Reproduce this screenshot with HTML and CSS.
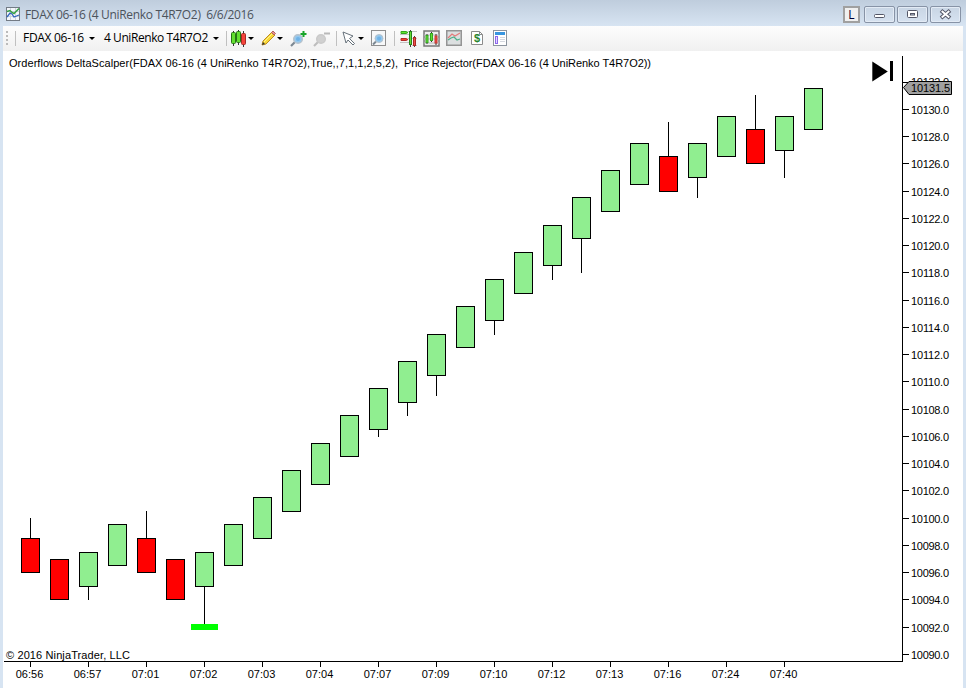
FILE: index.html
```html
<!DOCTYPE html>
<html lang="en">
<head>
<meta charset="utf-8">
<title>FDAX 06-16</title>
<link rel="stylesheet" href="styles.css">
</head>
<body>
<div class="window">
  <header class="titlebar">
    <svg class="app-icon" width="14" height="14" viewBox="0 0 14 14">
      <rect x=".5" y=".5" width="13" height="13" fill="#f4f7fb" stroke="#737b85"/>
      <path d="M1 4.500h12M1 9.500h12M4.500 1v12M9.500 1v12" stroke="#cdd3de"/>
      <path d="M1 10l3-4 2 1 2 3 5-2" fill="none" stroke="#3266bd" stroke-width="1.300"/>
      <path d="M1 4.500l3-1 2 2 2 1 5-5" fill="none" stroke="#35a044" stroke-width="1.500"/>
    </svg>
    <span class="title">FDAX 06-16 (4 UniRenko T4R7O2)&nbsp; 6/6/2016</span>
    <div class="controls">
      <span class="link">L</span>
      <span class="control"><svg width="29" height="16"><rect x="9.500" y="7.500" width="10" height="3" rx="1" fill="#fff" stroke="#535666"/></svg></span>
      <span class="control"><svg width="29" height="16"><rect x="9.500" y="3.500" width="10" height="7" rx="1" fill="#fff" stroke="#535666"/><rect x="12.500" y="6.500" width="4" height="1.500" fill="#c5d3e4" stroke="#535666"/></svg></span>
      <span class="control"><svg width="29" height="16"><path d="M10 3.500l9 7.500M19 3.500l-9 7.500" stroke="#535666" stroke-width="4"/><path d="M10.700 4.100l7.600 6.300M18.300 4.100l-7.600 6.300" stroke="#fff" stroke-width="2"/></svg></span>
    </div>
  </header>
  <main class="client">
    <nav class="toolbar">
      <i class="grip"></i><i class="sep"></i>
      <span class="pick instrument">FDAX 06-16</span><i class="arrow"></i>
      <span class="pick period">4 UniRenko T4R7O2</span><i class="arrow"></i>
      <i class="sep"></i>
      <svg class="candles" width="16" height="17" viewBox="0 0 16 17"><path d="M2.500 1v15M7.500 0v15M12.500 1v16" stroke="#333"/><rect x=".5" y="2.500" width="4" height="11" rx="1" fill="#63df32" stroke="#267516"/><rect x="5.500" y="1.500" width="4" height="11" rx="1" fill="#63df32" stroke="#267516"/><rect x="10.500" y="3.500" width="4" height="11" rx="1" fill="#f5443b" stroke="#a22c27"/></svg><i class="arrow tight"></i>
      <svg class="pencil" width="15" height="16" viewBox="0 0 15 16"><path d="M1 15l1-4 9-9 3 3-9 9z" fill="#f8d838" stroke="#bd8b23"/><path d="M3 12l8-8" stroke="#fff48b"/><path d="M10.500 2.500l1.500-1.500 2.500 2.500-1.500 1.500z" fill="#e58f8f" stroke="#b36360"/><path d="M1 15l1-3 2 2z" fill="#333"/></svg><i class="arrow tight"></i>
      <svg class="zoom-in" width="17" height="17" viewBox="0 0 17 17"><path d="M1 16l4-4" stroke="#7b8792" stroke-width="2.200"/><circle cx="8" cy="9" r="4.300" fill="#93c8ee" stroke="#b7c2cc" stroke-width="1.500"/><circle cx="8" cy="9" r="2" fill="#6fb2e6"/><path d="M13.500 1v6M10.500 4h6" stroke="#19a52b" stroke-width="2"/></svg>
      <svg class="zoom-out" width="17" height="17" viewBox="0 0 17 17"><path d="M1 16l4-4" stroke="#bdbdbd" stroke-width="2.200"/><circle cx="8" cy="9" r="4.300" fill="#d0d0d0" stroke="#cacaca" stroke-width="1.500"/><path d="M11 3.500h6" stroke="#b9b9b9" stroke-width="2"/></svg>
      <i class="sep cursor-sep"></i>
      <svg class="cursor" width="14" height="15" viewBox="0 0 14 15"><path d="M1 1l10 4-3.500 2.500 5 5-1.500 1.500-5-5L4 12z" fill="#fff" stroke="#66717a"/></svg><i class="arrow cursor-arrow"></i>
      <svg class="find" width="16" height="17" viewBox="0 0 16 17"><rect x=".5" y=".5" width="14" height="15" fill="#f7f8f9" stroke="#8f8f8f"/><path d="M2 14.500l3-3" stroke="#7b8792" stroke-width="2"/><circle cx="8" cy="8.500" r="4" fill="#93c8ee" stroke="#b7c2cc"/><circle cx="8" cy="8.500" r="2" fill="#6fb2e6"/></svg>
      <i class="sep trader-sep"></i>
      <svg class="trader" width="17" height="17" viewBox="0 0 17 17"><path d="M8 1.500h9M0 4.500h10M8 8.500h9M0 12.500h10M12 15.500h5" stroke="#c4c4c4"/><path d="M1 1.500h5l2 1-2 1H1z" fill="#61e531" stroke="#37a51d"/><path d="M1 8.500h5l2 1-2 1H1z" fill="#f44336" stroke="#b52c28"/><path d="M10.500 0v17M14.500 6v11" stroke="#444"/><rect x="9.500" y="1.500" width="2" height="13" fill="#65dc35" stroke="#26831c"/><rect x="13.500" y="7.500" width="2" height="8" fill="#ef5147" stroke="#a82b28"/></svg>
      <svg class="data" width="17" height="17" viewBox="0 0 17 17"><rect x="1" y="1" width="15" height="15" fill="#eee" stroke="#777" stroke-width="1.500"/><path d="M1 5h15M1 9h15M1 13h15" stroke="#bbb"/><path d="M4 4v10M8.500 2v10M13 4v11" stroke="#333"/><rect x="3" y="5.500" width="2" height="7" fill="#62df34" stroke="#35a521"/><rect x="7.500" y="3.500" width="2" height="7" fill="#62df34" stroke="#35a521"/><rect x="12" y="6" width="2" height="7" fill="#f44b40" stroke="#c33a34"/></svg>
      <svg class="indicator" width="16" height="16" viewBox="0 0 16 16"><rect x=".75" y=".75" width="14.500" height="14.500" fill="#dcdfe0" stroke="#949494" stroke-width="1.500"/><path d="M2 8l4-4 3 2 5-3" fill="none" stroke="#e47b7b" stroke-width="1.200"/><path d="M2 10l3-2 3-1 3 3 3-1" fill="none" stroke="#4eae88" stroke-width="1.200"/></svg>
      <svg class="money" width="12" height="14" viewBox="0 0 12 14"><path d="M.5.5h8l3 3v10H.5z" fill="#fff" stroke="#8b8b8b"/><path d="M8.500.5v3h3" fill="none" stroke="#8b8b8b"/><text class="dollar" x="6" y="11">$</text></svg>
      <svg class="panel" width="14" height="16" viewBox="0 0 14 16"><rect x=".5" y=".5" width="13" height="15" fill="#fff" stroke="#8c949e"/><path d="M2 3.500h10" stroke="#3895df" stroke-width="3"/><rect x="2.500" y="6.500" width="2" height="7" fill="#e5d7ff" stroke="#8b67ea"/><path d="M7 7.500h5M7 9.500h5M7 11.500h5" stroke="#d5d8df"/></svg>
    </nav>
    <svg class="chart" id="chart" width="960" height="637" viewBox="3 51 960 637">
      <text class="label" x="9" y="67" textLength="389">Orderflows DeltaScalper(FDAX 06-16 (4 UniRenko T4R7O2),True,,7,1,1,2,5,2),</text>
      <text class="label" x="404" y="67" textLength="247">Price Rejector(FDAX 06-16 (4 UniRenko T4R7O2))</text>
      <text class="label" x="6" y="659" textLength="124">© 2016 NinjaTrader, LLC</text>
      <path class="axis" d="M902.500 56v606M4 661.500h899"/>
      <g id="scale"></g>
      <g id="bars"></g>
      <rect x="191" y="624" width="27" height="6" fill="#0f0"/>
      <path class="smooth" d="M872.300 61.500l15.500 10-15.500 10z"/><rect x="890" y="61" width="3" height="20"/>
      <path class="smooth" d="M903.500 87.500l5.500-6h42.500v13H909z" fill="#a0a0a0" stroke="#000"/>
      <text class="label" x="911" y="92" textLength="39">10131.5</text>
    </svg>
  </main>
</div>
<script src="chart.js"></script>
</body>
</html>
```
FILE: styles.css
```css
body { margin: 0; background: #d7e4f2; }
.window { width: 966px; height: 688px; overflow: hidden; background: #d7e4f2; }
.titlebar { height: 26px; box-sizing: border-box; padding: 0 5px 0 6px; display: flex; align-items: flex-start; background: linear-gradient(#bfcddd, #d7e4f2); }
.app-icon { margin-top: 7px; }
.title { margin: 6px 0 0 5px; font: 12px/17px "Open Sans", sans-serif; color: #4c535c; letter-spacing: -.32px; white-space: nowrap; }
.controls { margin: 6px 0 0 auto; display: flex; gap: 2px; }
.link { box-sizing: border-box; width: 17px; height: 17px; border: 2px solid #a0a0a0; background: #f0f0f0; color: #003; font: 12px/13px "Open Sans", sans-serif; text-align: center; margin-right: 2px; }
.control { box-sizing: border-box; width: 31px; height: 17px; border: 1px solid #8793a6; border-radius: 2px; background: linear-gradient(#c8d5e4, #d6e2f0); box-shadow: inset 0 0 0 1px #e3ebf5; }
.control svg { display: block; }
.client { width: 960px; margin-left: 3px; background: #fff; }
.toolbar { height: 25px; display: flex; align-items: center; background: linear-gradient(#fdfdfd, #f0f0f0); }
.toolbar > * { flex: none; }
.toolbar > svg { margin-top: -1px; }
.grip { width: 2px; height: 15px; margin-left: 3px; background: repeating-linear-gradient(#bbb 0 2px, transparent 2px 4px); }
.sep { width: 1px; height: 15px; background: #c0c0c0; margin-left: 7px; }
.pick { font: 12px/18px "Open Sans", sans-serif; color: #000; white-space: nowrap; margin-top: -1px; }
.instrument { width: 61px; margin-left: 7px; letter-spacing: -.3px; }
.period { width: 105px; margin-left: 9px; letter-spacing: -.43px; }
.arrow { border: solid transparent; border-width: 3px 3px 0; border-top-color: #000; margin-left: 5px; }
.period + .arrow { margin-left: 4px; }
.arrow.tight { margin-left: 1px; }
.candles { margin-left: 4px; }
.pencil { margin-left: 7px; }
.zoom-in { margin-left: 7px; }
.zoom-out { margin-left: 6px; }
.cursor-sep { margin-left: 6px; }
.cursor { margin-left: 5px; }
.cursor-arrow { margin-left: 2px; }
.find { margin-left: 7px; }
.trader { margin-left: 5px; }
.data { margin-left: 6px; }
.indicator { margin-left: 6px; }
.money { margin-left: 9px; }
.panel { margin-left: 10px; }
.dollar { font: bold 11px "Liberation Sans", sans-serif; fill: #27842c; text-anchor: middle; }
.chart { display: block; shape-rendering: crispEdges; }
.smooth { shape-rendering: auto; }
.label { font: 11px "Liberation Sans", sans-serif; fill: #000; }
.time { text-anchor: middle; }
.axis { fill: none; stroke: #000; }
.up { fill: #90ee90; stroke: #000; }
.down { fill: #f00; stroke: #000; }
```
FILE: chart.js
```js
const NS = "http://www.w3.org/2000/svg";
function add(parent, name, attrs, text) {
  const el = document.createElementNS(NS, name);
  for (const k in attrs) el.setAttribute(k, attrs[k]);
  if (text) el.textContent = text;
  parent.appendChild(el);
}
const scale = document.getElementById("scale");
const bars = document.getElementById("bars");

for (let p = 10132; p >= 10090; p -= 2) {
  const y = Math.floor(109.3 + (10130 - p) * 13.625);
  add(scale, "path", { class: "axis", d: `M903 ${y + .5}h6` });
  add(scale, "text", { class: "label", x: 911, y: y + (p === 10132 ? 4 : 5), textLength: 38 }, p.toFixed(1));
}
["06:56", "06:57", "07:01", "07:02", "07:03", "07:04", "07:07", "07:09", "07:10", "07:12", "07:13", "07:16", "07:24", "07:40"].forEach((t, i) => {
  const x = 30 + i * 58;
  add(scale, "path", { class: "axis", d: `M${x + .5} 662v5` });
  add(scale, "text", { class: "label time", x: x - .5, y: 678 }, t);
});

// direction, body top, body bottom, wick end
[["down",538,573,518],["down",559,600],["up",552,587,600],["up",524,566],["down",538,573,511],["down",559,600],["up",552,587,624],
 ["up",524,566],["up",497,539],["up",470,512],["up",443,485],["up",415,457],["up",388,430,437],["up",361,403,416],
 ["up",334,376,396],["up",306,348],["up",279,321,335],["up",252,294],["up",225,266,280],["up",197,239,273],["up",170,212],
 ["up",143,185],["down",156,192,122],["up",143,178,198],["up",116,157],["down",129,164,95],["up",116,151,178],["up",88,130]
].forEach(([dir, top, bottom, wick], i) => {
  const x = 21 + i * 29;
  if (wick) add(bars, "path", { class: "axis", d: `M${x + 9.5} ${wick}V${wick < top ? top : bottom}` });
  add(bars, "rect", { class: dir, x: x + .5, y: top + .5, width: 18, height: bottom - top - 1 });
});
```
